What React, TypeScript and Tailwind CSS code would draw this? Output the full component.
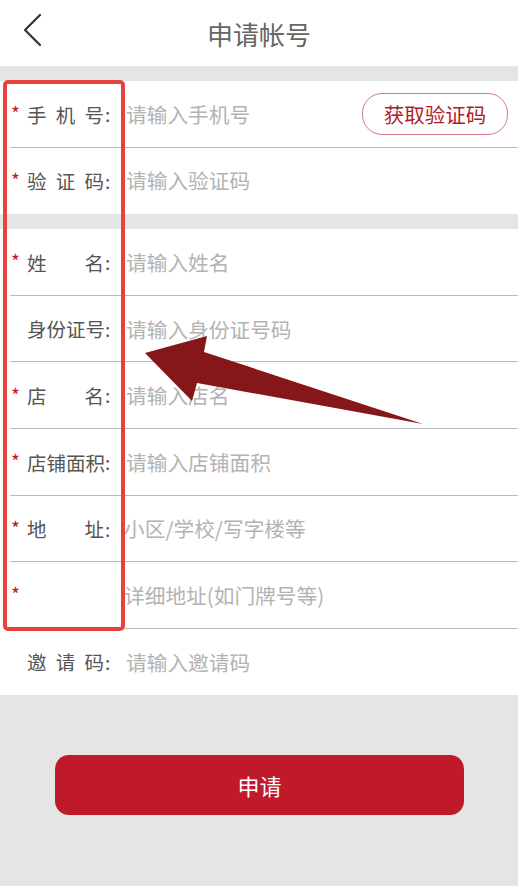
import React from "react";

const F = { fontFamily: '"Noto Sans CJK SC", "Noto Sans", sans-serif' };

function Label({ chars, star }: { chars: string[]; star: boolean }) {
  return (
    <div className="flex items-center w-[126px] shrink-0 h-full">
      <span className="w-[27px] pl-[11px] text-[#c0192a] text-[19px] leading-none -mt-[3px]">{star ? "*" : ""}</span>
      {chars.length > 0 ? (
        <div className="flex items-center">
          <div className="flex justify-between w-[77px] text-[19.5px] text-[#555]">
            {chars.map((c, i) => (
              <span key={i}>{c}</span>
            ))}
          </div>
          <span className="text-[19px] text-[#555] ml-[1px]">:</span>
        </div>
      ) : null}
    </div>
  );
}

function Row({
  chars,
  star,
  ph,
  divider,
  phShift,
  children,
}: {
  chars: string[];
  star: boolean;
  ph: string;
  divider: boolean;
  phShift?: boolean;
  children?: React.ReactNode;
}) {
  return (
    <div className="relative h-[66.6px] flex items-center bg-white">
      <Label chars={chars} star={star} />
      <span className={"text-[20.7px] text-[#b3b3b3] " + (phShift ? "-ml-[2px]" : "")}>{ph}</span>
      {children}
      {divider && <div className="absolute left-[10px] right-0 bottom-0 h-px bg-[#b9b9b9]" />}
    </div>
  );
}

export default function App() {
  return (
    <div className="relative w-[518px] h-[886px] bg-[#e5e5e5] overflow-hidden" style={F}>
      <div className="relative h-[66px] bg-white flex items-center justify-center">
        <svg className="absolute left-[22px] top-[13px]" width="22" height="34" viewBox="0 0 22 34">
          <path d="M18 2 L3 17 L18 32" fill="none" stroke="#333" strokeWidth="2.2" strokeLinecap="round" strokeLinejoin="round" />
        </svg>
        <span className="text-[26px] text-[#666]">申请帐号</span>
      </div>
      <div className="h-[15px]" />
      <div className="bg-white">
        <Row chars={["手", "机", "号"]} star ph="请输入手机号" divider>
          <div className="ml-auto mr-[10px] w-[146px] h-[42px] rounded-[20px] border border-[#d57a84] flex items-center justify-center text-[20.5px] text-[#b01c2a]">
            获取验证码
          </div>
        </Row>
        <Row chars={["验", "证", "码"]} star ph="请输入验证码" divider={false} />
      </div>
      <div className="h-[15px]" />
      <div className="bg-white">
        <Row chars={["姓", "名"]} star ph="请输入姓名" divider />
        <Row chars={["身", "份", "证", "号"]} star={false} ph="请输入身份证号码" divider />
        <Row chars={["店", "名"]} star ph="请输入店名" divider />
        <Row chars={["店", "铺", "面", "积"]} star ph="请输入店铺面积" divider />
        <Row chars={["地", "址"]} star ph="小区/学校/写字楼等" divider phShift />
        <Row chars={[]} star ph="详细地址(如门牌号等)" divider phShift />
        <Row chars={["邀", "请", "码"]} star={false} ph="请输入邀请码" divider={false} />
      </div>
      <div className="pt-[60px] pl-[55px]">
        <div className="w-[409px] h-[60px] rounded-[14px] bg-[#c0192a] flex items-center justify-center text-white text-[22px]">
          申请
        </div>
      </div>
      <div className="absolute left-[3px] top-[80px] w-[122px] h-[551px] border-[4px] border-[#e8413e] rounded-[5px] pointer-events-none" />
      <svg className="absolute left-0 top-0 pointer-events-none" width="518" height="886">
        <polygon points="145,353 207,336 204,352 423,424 197,383 192,401" fill="#85161a" />
      </svg>
    </div>
  );
}
